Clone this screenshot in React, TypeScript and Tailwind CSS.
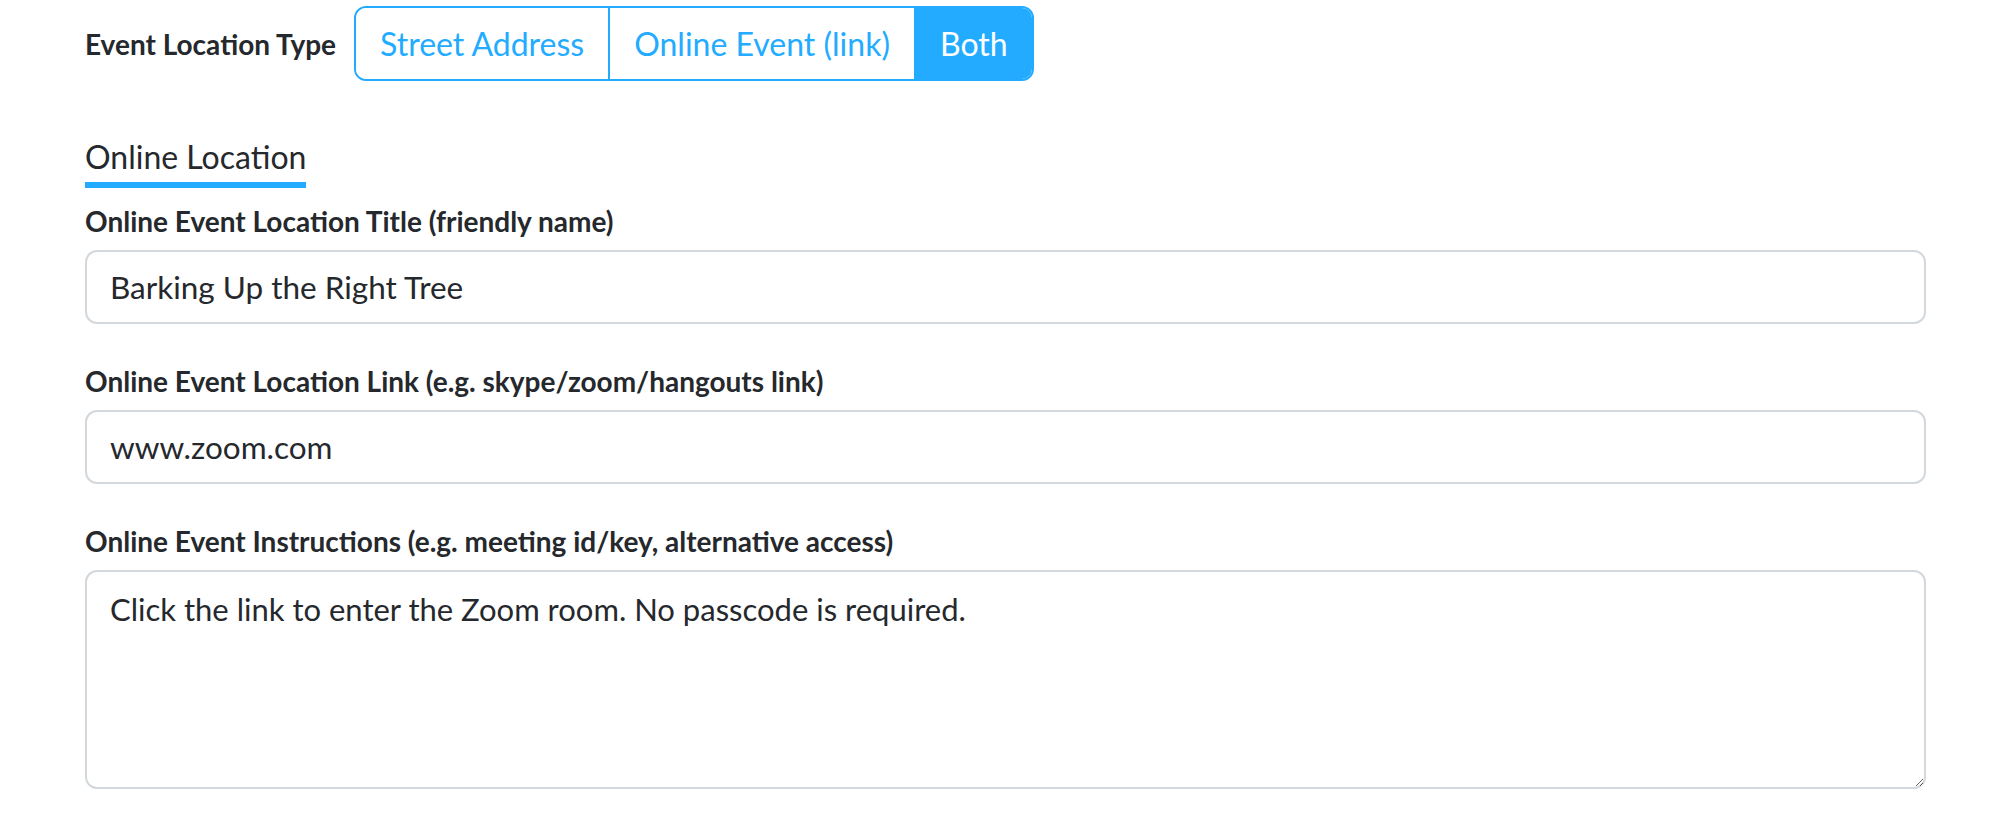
import React, { useState } from 'react';

const options = ['Street Address', 'Online Event (link)', 'Both'];

export default function App() {
  const [locType, setLocType] = useState('Both');
  const [title, setTitle] = useState('Barking Up the Right Tree');
  const [link, setLink] = useState('www.zoom.com');
  const [notes, setNotes] = useState('Click the link to enter the Zoom room. No passcode is required.');

  const labelClass = "block text-[28px] leading-[34px] font-bold text-[#25282c] mb-[12px]";
  const inputClass = "w-full h-[74px] px-[23px] rounded-[12px] border-2 border-[#d3d8dd] bg-white text-[31.5px] text-[#25282c] outline-none";

  return (
    <div className="min-h-screen bg-white font-['Lato',sans-serif] pl-[85px] pr-[73px] pt-[6px]">
      <div className="flex items-center gap-[18px]">
        <span className="text-[28px] leading-[34px] font-bold text-[#25282c]">Event Location Type</span>
        <div className="flex h-[75px] rounded-[12px] border-2 border-[#23acff] overflow-hidden">
          {options.map((o, i) => (
            <button
              key={o}
              type="button"
              onClick={() => setLocType(o)}
              className={`px-[24px] text-[32px] leading-none ${i > 0 ? 'border-l-2 border-[#23acff]' : ''} ${locType === o ? 'bg-[#23acff] text-white' : 'bg-white text-[#23acff]'}`}
            >
              {o}
            </button>
          ))}
        </div>
      </div>

      <div className="mt-[58px]">
        <h3 className="inline-block text-[32px] leading-[36px] text-[#25282c] pb-[7px] border-b-[6px] border-[#23acff]">Online Location</h3>
      </div>

      <div className="mt-[16px]">
        <label className={labelClass}>Online Event Location Title (friendly name)</label>
        <input type="text" className={inputClass} value={title} onChange={e => setTitle(e.target.value)} />
      </div>

      <div className="mt-[40px]">
        <label className={labelClass}>Online Event Location Link (e.g. skype/zoom/hangouts link)</label>
        <input type="text" className={inputClass} value={link} onChange={e => setLink(e.target.value)} />
      </div>

      <div className="mt-[40px]">
        <label className={labelClass}>Online Event Instructions (e.g. meeting id/key, alternative access)</label>
        <textarea
          className="block w-full h-[219px] px-[23px] pt-[14px] rounded-[12px] border-2 border-[#d3d8dd] bg-white text-[31px] leading-[46px] text-[#25282c] outline-none"
          value={notes}
          onChange={e => setNotes(e.target.value)}
        />
      </div>
    </div>
  );
}
